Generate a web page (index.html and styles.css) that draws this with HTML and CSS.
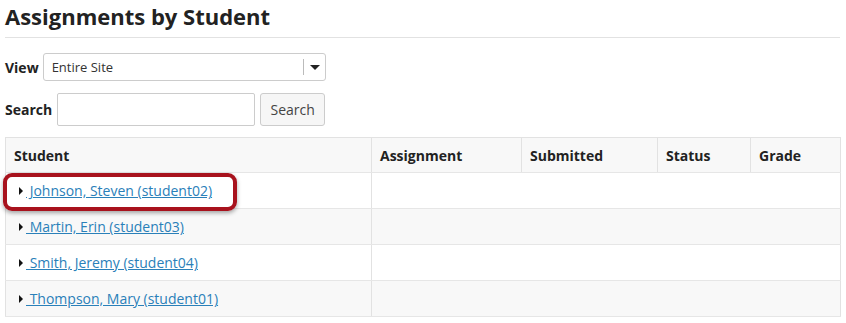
FILE: index.html
```html
<!DOCTYPE html>
<html lang="en">
<head>
    <meta charset="UTF-8">
    <title>Assignments by Student</title>
    <link rel="stylesheet" href="styles.css">
</head>
<body>
    <div class="page">
        <h1 class="page-title">Assignments by Student</h1>

        <div class="filter-row">
            <label class="filter-label">View</label>
            <div class="select-box">
                <span class="select-value">Entire Site</span>
                <span class="select-arrow"></span>
            </div>
        </div>

        <div class="filter-row search-row">
            <label class="filter-label">Search</label>
            <input type="text" class="search-input">
            <button class="search-btn">Search</button>
        </div>

        <table class="students">
            <thead>
                <tr>
                    <th class="col-student">Student</th>
                    <th class="col-assignment">Assignment</th>
                    <th class="col-submitted">Submitted</th>
                    <th class="col-status">Status</th>
                    <th class="col-grade">Grade</th>
                </tr>
            </thead>
            <tbody>
                <tr>
                    <td>
                        <div class="student-cell">
                            <span class="toggle"></span><a href="#" class="student-link">&nbsp;Johnson, Steven (student02)</a>
                            <span class="callout"></span>
                        </div>
                    </td>
                    <td colspan="4"></td>
                </tr>
                <tr>
                    <td><div class="student-cell"><span class="toggle"></span><a href="#" class="student-link">&nbsp;Martin, Erin (student03)</a></div></td>
                    <td colspan="4"></td>
                </tr>
                <tr>
                    <td><div class="student-cell"><span class="toggle"></span><a href="#" class="student-link">&nbsp;Smith, Jeremy (student04)</a></div></td>
                    <td colspan="4"></td>
                </tr>
                <tr>
                    <td><div class="student-cell"><span class="toggle"></span><a href="#" class="student-link">&nbsp;Thompson, Mary (student01)</a></div></td>
                    <td colspan="4"></td>
                </tr>
            </tbody>
        </table>
    </div>
</body>
</html>
```

FILE: styles.css
```css
body {
    margin: 0;
    font-family: 'Open Sans', 'DejaVu Sans', sans-serif;
    font-size: 14px;
    color: #333;
    background: #fff;
}

.page {
    padding: 0 6px 0 5px;
}

.page-title {
    margin: 0;
    padding-top: 1px;
    font-size: 22px;
    line-height: 30px;
    font-weight: 700;
    color: #222;
    border-bottom: 1px solid #e2e2e2;
    padding-bottom: 6px;
}

.filter-row {
    display: flex;
    align-items: center;
    gap: 4px;
    margin-top: 15px;
}

.search-row {
    margin-top: 12px;
    gap: 5px;
}

.filter-label {
    font-weight: 700;
    color: #222;
}

.select-box {
    display: flex;
    align-items: center;
    width: 281px;
    height: 26px;
    border: 1px solid #ccc;
    border-radius: 3px;
    background: #fff;
}

.select-value {
    flex: 1;
    padding-left: 8px;
    font-size: 13px;
    color: #333;
}

.select-arrow {
    width: 21px;
    height: 16px;
    border-left: 1px solid #bbb;
    position: relative;
}

.select-arrow::after {
    content: "";
    position: absolute;
    left: 6px;
    top: 6px;
    border-left: 5px solid transparent;
    border-right: 5px solid transparent;
    border-top: 5px solid #222;
}

.search-input {
    width: 198px;
    height: 33px;
    box-sizing: border-box;
    border: 1px solid #ccc;
    border-radius: 2px;
    margin: 0;
}

.search-btn {
    height: 33px;
    width: 65px;
    box-sizing: border-box;
    border: 1px solid #ccc;
    border-radius: 3px;
    background: #f6f6f6;
    font-family: inherit;
    font-size: 14px;
    color: #444;
    padding: 0;
}

.students {
    width: 836px;
    margin-top: 11px;
    border-collapse: collapse;
    border: 1px solid #e2e2e2;
}

.students th,
.students td {
    border: 1px solid #e2e2e2;
    border-top: none;
    border-bottom: 1px solid #e6e6e6;
    text-align: left;
    padding: 0 8px;
    height: 35px;
}

.students th {
    background: #f8f8f8;
    font-weight: 700;
    color: #222;
    height: 34px;
    border-top: 1px solid #e2e2e2;
}

.col-student { width: 349px; }
.col-assignment { width: 133px; }
.col-submitted { width: 119px; }
.col-status { width: 76px; }

.students tbody tr:nth-child(even) td {
    background: #f8f8f8;
}

.student-cell {
    position: relative;
    display: flex;
    align-items: center;
    padding-left: 5px;
}

.toggle {
    width: 0;
    height: 0;
    border-top: 4px solid transparent;
    border-bottom: 4px solid transparent;
    border-left: 4px solid #111;
    margin-right: 3px;
}

.student-link {
    color: #2a80b9;
    text-decoration: underline;
}

.callout {
    position: absolute;
    left: -11px;
    top: -8px;
    width: 226px;
    height: 30px;
    border: 4px solid #a8121d;
    border-radius: 9px;
    box-shadow: 0 2px 4px rgba(0, 0, 0, 0.35);
}
```
